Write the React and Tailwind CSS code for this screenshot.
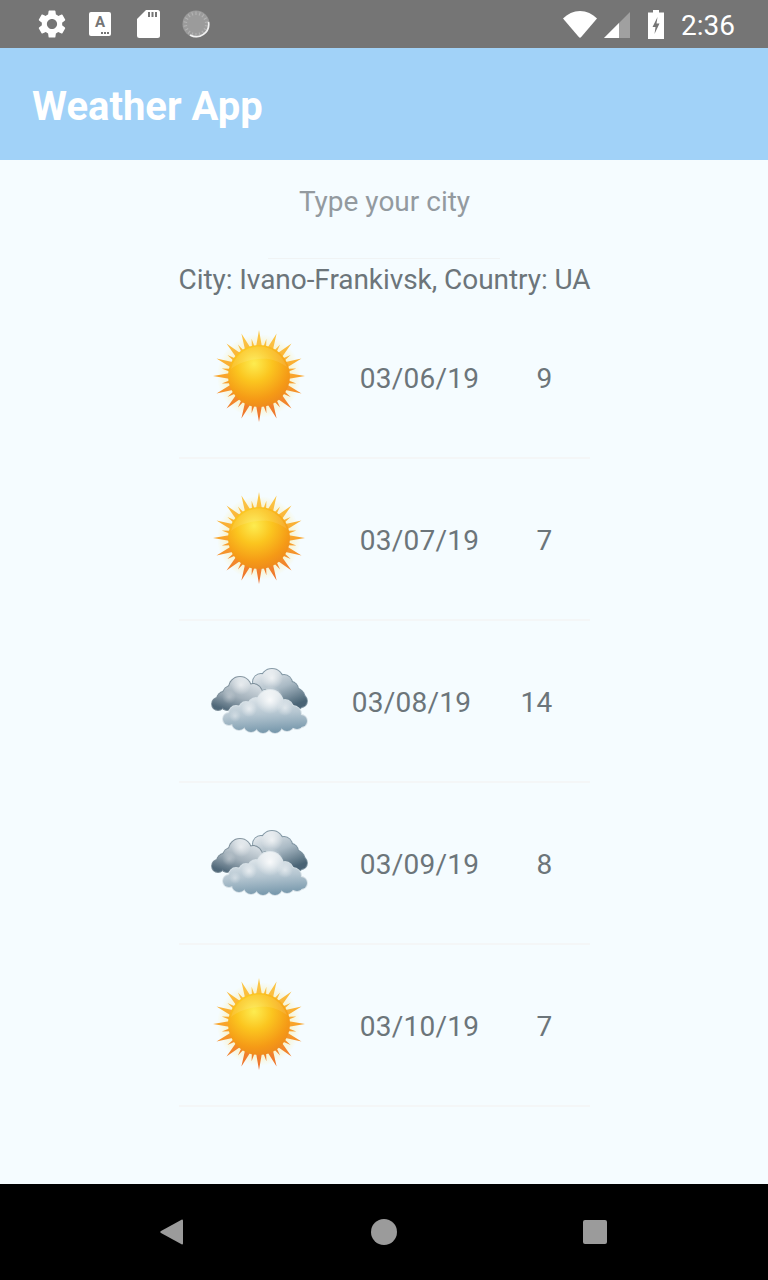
import { MdSettings } from "react-icons/md";

const FORECAST = [
  { id: 1, icon: "sun", date: "03/06/19", temp: 9 },
  { id: 2, icon: "sun", date: "03/07/19", temp: 7 },
  { id: 3, icon: "cloud", date: "03/08/19", temp: 14 },
  { id: 4, icon: "cloud", date: "03/09/19", temp: 8 },
  { id: 5, icon: "sun", date: "03/10/19", temp: 7 },
];

const RAYS = Array.from({ length: 32 }, (_, i) => {
  const long = i % 2 === 0;
  const angle = (i * 360) / 32;
  return { angle, len: long ? 46 : 38, half: long ? 2.8 : 1.3 };
});

function SunIcon() {
  return (
    <svg viewBox="0 0 100 100" className="w-[100px] h-[100px]">
      <defs>
        <linearGradient id="sunRay" x1="0" y1="0" x2="0" y2="1">
          <stop offset="0" stopColor="#fccb4a" />
          <stop offset="0.5" stopColor="#f9a42a" />
          <stop offset="1" stopColor="#ec6e2c" />
        </linearGradient>
        <radialGradient id="sunGlow" cx="50%" cy="50%" r="50%">
          <stop offset="0.7" stopColor="#ffe680" stopOpacity="0.45" />
          <stop offset="1" stopColor="#ffe680" stopOpacity="0" />
        </radialGradient>
        <radialGradient id="sunBall" cx="42%" cy="30%" r="72%">
          <stop offset="0" stopColor="#fdec50" />
          <stop offset="0.4" stopColor="#fbc51f" />
          <stop offset="0.8" stopColor="#f59a16" />
          <stop offset="1" stopColor="#ee8a1c" />
        </radialGradient>
      </defs>
      <circle cx="50" cy="49" r="42" fill="url(#sunGlow)" />
      <path
        fill="url(#sunRay)"
        d={RAYS.map((r) => {
          const a = (r.angle * Math.PI) / 180;
          const tipX = 50 + Math.sin(a) * r.len;
          const tipY = 49 - Math.cos(a) * r.len;
          const baseX = 50 + Math.sin(a) * 30;
          const baseY = 49 - Math.cos(a) * 30;
          const nx = Math.cos(a) * r.half;
          const ny = Math.sin(a) * r.half;
          return `M${baseX - nx} ${baseY - ny}L${tipX} ${tipY}L${baseX + nx} ${baseY + ny}Z`;
        }).join("")}
      />
      <circle cx="50" cy="49" r="31" fill="url(#sunBall)" />
      <path d="M22 42C26 27 38 19.5 50 19.5C62 19.5 73 27 78 40C68 33 60 31 50 32C39 33 30 36 22 42Z" fill="#fff" opacity="0.1" />
    </svg>
  );
}

const BACK_LOBES = [[63, 29, 11], [52, 31, 8], [75, 32, 8], [82, 38, 7], [70, 42, 13], [85, 48, 11], [92, 50, 6]];
const LEFT_LOBES = [[31, 37, 11], [22, 43, 8], [15, 48, 7], [9, 53, 6], [30, 48, 11], [44, 42, 9], [50, 47, 6], [18, 54, 5]];
const FRONT_LOBES = [[61, 52, 13], [47, 55, 8], [37, 58, 7], [27, 62, 7], [20, 68, 6], [76, 57, 8], [84, 63, 8], [92, 70, 6], [30, 72, 7], [42, 74, 7], [54, 75, 7], [66, 75, 7], [78, 73, 7], [88, 72, 6], [55, 65, 11], [72, 65, 10], [38, 66, 9]];

function Lobes({ lobes, fill, rim }) {
  return (
    <g>
      {lobes.map(([cx, cy, r]) => (
        <circle key={`${cx}-${cy}`} cx={cx} cy={cy} r={r + 0.9} fill={rim} />
      ))}
      {lobes.map(([cx, cy, r]) => (
        <circle key={`${cx}-${cy}-f`} cx={cx} cy={cy} r={r} fill={fill} />
      ))}
    </g>
  );
}

function Shine({ cx, cy, r, opacity = 1 }) {
  return <circle cx={cx} cy={cy} r={r} fill="url(#cloudShine)" opacity={opacity} />;
}

function CloudIcon() {
  return (
    <svg viewBox="0 0 100 100" className="w-[100px] h-[100px]">
      <defs>
        <linearGradient id="cloudBack" gradientUnits="userSpaceOnUse" x1="60" y1="18" x2="76" y2="58">
          <stop offset="0" stopColor="#e6ebef" />
          <stop offset="0.5" stopColor="#a9b9c4" />
          <stop offset="1" stopColor="#486374" />
        </linearGradient>
        <linearGradient id="cloudLeft" gradientUnits="userSpaceOnUse" x1="32" y1="26" x2="20" y2="60">
          <stop offset="0" stopColor="#dde4e9" />
          <stop offset="0.55" stopColor="#a2b0ba" />
          <stop offset="1" stopColor="#506879" />
        </linearGradient>
        <linearGradient id="cloudFront" gradientUnits="userSpaceOnUse" x1="55" y1="40" x2="58" y2="82">
          <stop offset="0" stopColor="#e9eef1" />
          <stop offset="0.55" stopColor="#b5c6d1" />
          <stop offset="1" stopColor="#7697ab" />
        </linearGradient>
        <radialGradient id="cloudShine">
          <stop offset="0" stopColor="#fff" stopOpacity="0.85" />
          <stop offset="1" stopColor="#fff" stopOpacity="0" />
        </radialGradient>
        <filter id="cloudSoft" x="-5%" y="-5%" width="110%" height="110%">
          <feGaussianBlur stdDeviation="0.4" />
        </filter>
      </defs>
      <g filter="url(#cloudSoft)">
        <Lobes lobes={BACK_LOBES} fill="url(#cloudBack)" rim="#7a909e" />
        <Shine cx={63} cy={27} r={11} opacity={0.8} />
        <Lobes lobes={LEFT_LOBES} fill="url(#cloudLeft)" rim="#7a8c98" />
        <Shine cx={32} cy={34} r={10} opacity={0.7} />
        <Shine cx={20} cy={46} r={7} opacity={0.35} />
        <Lobes lobes={FRONT_LOBES} fill="url(#cloudFront)" rim="#d7e1e7" />
        <Shine cx={61} cy={49} r={14} />
        <Shine cx={40} cy={58} r={8} opacity={0.7} />
        <Shine cx={76} cy={57} r={8} opacity={0.6} />
        <Shine cx={26} cy={65} r={6} opacity={0.45} />
      </g>
    </svg>
  );
}

function StatusBar() {
  return (
    <div className="h-12 bg-[#757575] flex items-center shrink-0 pl-[35px] pr-[33px]">
      <MdSettings className="text-white w-[34px] h-[34px]" />
      <div className="ml-[20px] w-[22px] h-[24px] bg-white rounded-[2px] flex flex-col items-center relative">
        <span className="text-[#757575] text-[15px] font-bold leading-[18px] mt-[1px]">A</span>
        <div className="absolute right-[2px] bottom-[2px] flex gap-px">
          <div className="w-[2px] h-[2px] bg-[#757575]" />
          <div className="w-[2px] h-[2px] bg-[#757575]" />
          <div className="w-[2px] h-[2px] bg-[#757575]" />
        </div>
      </div>
      {/* sd card */}
      <svg viewBox="0 0 23 28" className="ml-[26px] w-[23px] h-[28px]">
        <path d="M9 0H20.5A2.5 2.5 0 0 1 23 2.5V25.5A2.5 2.5 0 0 1 20.5 28H2.5A2.5 2.5 0 0 1 0 25.5V9Z" fill="#fff" />
        <path d="M11 2h2v5h-2zM14.5 2h2v5h-2zM18 2h2v5h-2z" fill="#757575" />
      </svg>
      {/* loading spinner */}
      <svg viewBox="0 0 28 28" className="ml-[22px] w-[28px] h-[28px]">
        <circle cx="14" cy="14" r="13.5" fill="#9b9b9b" />
        <g stroke="#b4b4b4" strokeWidth="1">
          {Array.from({ length: 18 }, (_, i) => (
            <line key={i} x1="14" y1="1.5" x2="14" y2="5" transform={`rotate(${i * 20} 14 14)`} />
          ))}
        </g>
        <path d="M26.5 12A12.5 12.5 0 0 1 8 25" fill="none" stroke="#f2f2f2" strokeWidth="1.6" />
      </svg>
      <div className="flex-1" />
      {/* wifi */}
      <svg viewBox="0 0 34 28" className="w-[34px] h-[28px]">
        <path d="M0 8.5C4.5 4 10.5 1 17 1C23.5 1 29.5 4 34 8.5L18.2 27a1.6 1.6 0 0 1-2.4 0Z" fill="#fff" />
      </svg>
      {/* signal */}
      <svg viewBox="0 0 26 26" className="ml-[7px] w-[26px] h-[26px] mt-[2px]">
        <path d="M26 0V26H0Z" fill="#a0a0a0" />
        <path d="M15 11V26H0Z" fill="#fff" />
      </svg>
      {/* battery */}
      <svg viewBox="0 0 16 29" className="ml-[18px] w-[16px] h-[29px]">
        <path d="M5 0H11V2.5H16V29H0V2.5H5Z" fill="#fff" />
        <path d="M9.5 7L4.5 17H7.5L6.5 24L11.5 13.5H8.5Z" fill="#757575" />
      </svg>
      <span className="ml-[17px] pt-[4px] text-white text-[28px] leading-none">2:36</span>
    </div>
  );
}

function ForecastRow({ item }) {
  return (
    <div className="h-[162px] border-b-2 border-[#f4f6f7] flex items-center justify-between pl-[30px] pr-[37px]">
      <div className="w-[100px] h-[100px] shrink-0">
        {item.icon === "sun" ? <SunIcon /> : <CloudIcon />}
      </div>
      <span className="mr-[6px] pt-[4px] tracking-[0.25px]">{item.date}</span>
      <span className="pt-[4px] tracking-[0.25px]">{item.temp}</span>
    </div>
  );
}

export default function App() {
  return (
    <div className="h-[1280px] flex flex-col bg-[#f5fcff] font-['Roboto',sans-serif] overflow-hidden">
      <StatusBar />
      <div className="h-[112px] bg-[#a1d2f8] flex items-center pl-[32px] shrink-0">
        <h1 className="text-white text-[40px] font-bold leading-none pt-[5px]">Weather App</h1>
      </div>

      <div className="flex-1 flex flex-col items-center text-[#6c757a] text-[28px]">
        <div className="w-[232px] h-[99px] border-b border-[#f0f3f4] pt-[25px] pl-[1px] text-center leading-[34px] text-[#939a9f]">
          Type your city
        </div>
        <div className="w-[411px]">
          <p className="text-center whitespace-nowrap leading-[38px] h-[38px] pt-[2px] tracking-[-0.06px]">City: Ivano-Frankivsk, Country: UA</p>
          {FORECAST.map((item) => (
            <ForecastRow key={item.id} item={item} />
          ))}
        </div>
      </div>

      <div className="h-24 bg-black shrink-0 flex items-center pl-[160px] pr-[161px] justify-between">
        <svg viewBox="0 0 23 26" className="w-[23px] h-[26px]">
          <path d="M22 0.5A1 1 0 0 1 23 1.5V24.5A1 1 0 0 1 22 25.5L1 14A1.2 1.2 0 0 1 1 12Z" fill="#9b9b9b" />
        </svg>
        <div className="w-[26px] h-[26px] rounded-full bg-[#9b9b9b] ml-[2px]" />
        <div className="w-[24px] h-[24px] rounded-[2px] bg-[#9b9b9b]" />
      </div>
    </div>
  );
}
